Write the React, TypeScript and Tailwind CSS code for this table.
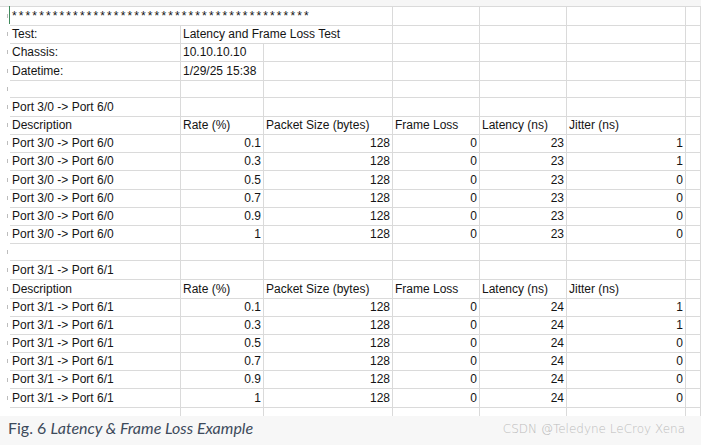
import type { ReactNode } from 'react'

type Cell = { text?: ReactNode; span?: number; right?: boolean; className?: string }

const COLS = 'grid grid-cols-[171px_83px_129px_87px_87px_119px_1fr]'

function blankRow(): Cell[] {
  return [{}, {}, {}, {}, {}, {}, {}]
}

function headerRow(): Cell[] {
  return [
    { text: 'Description' },
    { text: 'Rate (%)' },
    { text: 'Packet Size (bytes)' },
    { text: 'Frame Loss' },
    { text: 'Latency (ns)' },
    { text: 'Jitter (ns)' },
    {},
  ]
}

function dataRows(port: string, latency: number): Cell[][] {
  const rates = ['0.1', '0.3', '0.5', '0.7', '0.9', '1']
  const jitter = [1, 1, 0, 0, 0, 0]
  return rates.map((rate, i) => [
    { text: port },
    { text: rate, right: true },
    { text: 128, right: true },
    { text: 0, right: true },
    { text: latency, right: true },
    { text: jitter[i], right: true },
    {},
  ])
}

const rows: Cell[][] = [
  [{ text: '********************************************', span: 3, className: 'tracking-[2.12px]' }, {}, {}, {}, {}],
  [{ text: 'Test:' }, { text: 'Latency and Frame Loss Test', span: 2 }, {}, {}, {}, {}],
  [{ text: 'Chassis:' }, { text: '10.10.10.10' }, {}, {}, {}, {}, {}],
  [{ text: 'Datetime:' }, { text: '1/29/25 15:38' }, {}, {}, {}, {}, {}],
  blankRow(),
  [{ text: 'Port 3/0 -> Port 6/0' }, {}, {}, {}, {}, {}, {}],
  headerRow(),
  ...dataRows('Port 3/0 -> Port 6/0', 23),
  blankRow(),
  [{ text: 'Port 3/1 -> Port 6/1' }, {}, {}, {}, {}, {}, {}],
  headerRow(),
  ...dataRows('Port 3/1 -> Port 6/1', 24),
]

const spanClass: Record<number, string> = { 1: '', 2: 'col-span-2', 3: 'col-span-3' }

export default function App() {
  return (
    <div className="flex h-[445px] w-[701px] flex-col overflow-hidden bg-white font-['Liberation_Sans',Arial,sans-serif] text-[12px] text-[#141414]">
      <div className="h-[7px] shrink-0 border-b border-[#dadada] bg-[#f6f6f6]" />
      <div className="flex">
        {/* row-number gutter remnants */}
        <div className="relative w-[10px] shrink-0">
          {rows.map((_, i) => (
            <div key={i} className="flex h-[18.18px] items-center">
              <div className="ml-[7px] h-[4px] w-px bg-[#bdbdbd]" />
            </div>
          ))}
          <div className="absolute left-[8.5px] top-[-1px] h-[18px] w-[1.5px] bg-[#3f8a5c]" />
        </div>
        <div className="flex-1">
          {rows.map((row, r) => (
            <div key={r} className={`${COLS} h-[18.18px]`}>
              {row.map((cell, c) => (
                <div
                  key={c}
                  className={`${spanClass[cell.span ?? 1]} flex items-center whitespace-nowrap border-b border-r border-[#dadada] px-[2px] pt-px leading-[17px] ${
                    cell.right ? 'justify-end' : 'justify-start pl-[2px]'
                  } ${cell.className ?? ''}`}
                >
                  {cell.text}
                </div>
              ))}
            </div>
          ))}
          <div className={`${COLS} h-[9px]`}>
            {blankRow().map((_, c) => (
              <div key={c} className="border-r border-[#dadada]" />
            ))}
          </div>
        </div>
      </div>
      <div className="flex flex-1 items-start justify-between bg-[#f7f7f7] pl-[8px] pr-[16px] pt-[2px]">
        <p className="font-['Lato',sans-serif] text-[16px] leading-[19px] text-[#3d4a5b]">
          Fig. 6 <span className="italic">Latency &amp; Frame Loss Example</span>
        </p>
        <p className="pt-[4px] font-['DejaVu_Sans',sans-serif] text-[12px] font-light leading-[14px] text-[#bcbcbc]">
          CSDN @Teledyne LeCroy Xena
        </p>
      </div>
    </div>
  )
}
